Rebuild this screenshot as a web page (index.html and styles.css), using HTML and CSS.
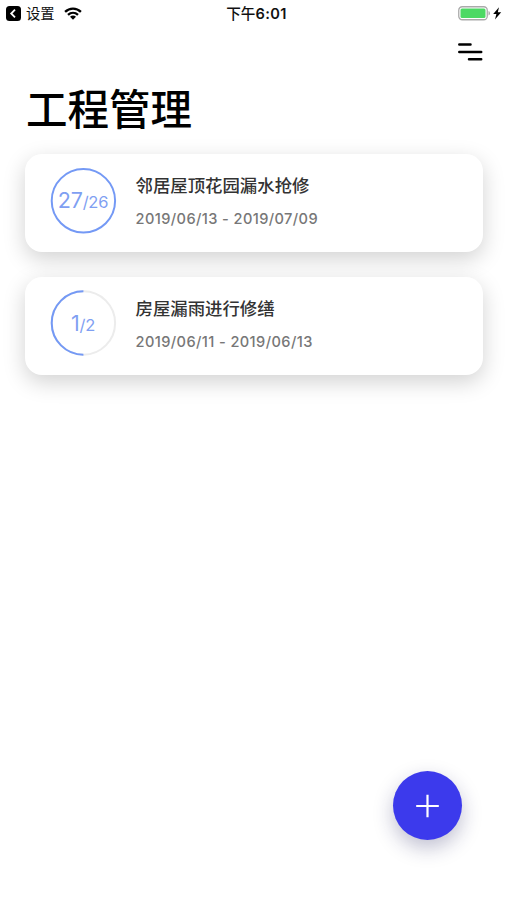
FILE: index.html
```html
<!DOCTYPE html>
<html lang="zh-CN">
<head>
  <meta charset="UTF-8" />
  <meta name="viewport" content="width=device-width, initial-scale=1.0" />
  <title>工程管理</title>
  <link rel="stylesheet" href="styles.css">
</head>
<body>
  <!-- status bar -->
  <div class="status">
    <div class="status-left">
      <svg class="back" width="15" height="15" viewBox="0 0 15 15"><rect width="15" height="15" rx="3.5"/><path d="M9 3.7 L5.2 7.5 L9 11.3"/></svg>
      <span class="back-text">设置</span>
      <svg class="wifi" width="18" height="13" viewBox="0 0 18 13">
        <path d="M1.1 4.9 C5.6 .5 12.4 .5 16.9 4.9 M4 7.8 C6.9 5.1 11.1 5.1 14 7.8"/>
        <path class="dot" d="M6 9.8 C7.8 8.2 10.2 8.2 12 9.8 L9 12.8 Z"/>
      </svg>
    </div>
    <div class="time">下午<span>6:01</span></div>
    <div class="status-right">
      <svg width="44" height="15" viewBox="0 0 44 15">
        <rect class="shell" x=".75" y=".75" width="28.5" height="13" rx="3.5"/>
        <rect class="level" x="2.5" y="2.5" width="25" height="9.5" rx="1.5"/>
        <path class="cap" d="M30.5 5 Q32 5.5 32 7.2 Q32 9 30.5 9.5 Z"/>
        <path d="M41 1.2 L35.2 8 H38.4 L37 13.6 L43.2 6.2 H39.8 Z"/>
      </svg>
    </div>
  </div>

  <div class="toolbar">
    <svg class="menu" width="26" height="20" viewBox="0 0 26 20"><path d="M2.3 2.5 H13.5 M2.3 9.9 H24.2 M12 17.2 H24.2"/></svg>
  </div>

  <h1>工程管理</h1>

  <div class="list">
    <div class="card">
      <div class="ring">
        <svg width="66" height="66" viewBox="0 0 66 66">
          <circle class="bar" cx="32.4" cy="32.8" r="31.7"/>
        </svg>
        <div class="count"><b>27</b>/26</div>
      </div>
      <div class="info">
        <div class="name">邻居屋顶花园漏水抢修</div>
        <div class="date">2019/06/13 - 2019/07/09</div>
      </div>
    </div>

    <div class="card">
      <div class="ring">
        <svg width="66" height="66" viewBox="0 0 66 66">
          <circle class="track" cx="32.4" cy="32" r="31.7"/>
          <path class="bar" d="M32.4 63.7 A31.7 31.7 0 0 1 32.4 .3"/>
        </svg>
        <div class="count"><b>1</b>/2</div>
      </div>
      <div class="info">
        <div class="name">房屋漏雨进行修缮</div>
        <div class="date">2019/06/11 - 2019/06/13</div>
      </div>
    </div>
  </div>

  <button class="add">
    <svg width="24" height="24" viewBox="0 0 24 24"><path d="M11.5 .7 V23.3 M.2 12 H22.8"/></svg>
  </button>
</body>
</html>
```
FILE: styles.css
```css
* { box-sizing: border-box; }
body {
  margin: 0;
  height: 900px;
  background: #fff;
  color: #111;
  font-family: Inter, "Noto Sans CJK SC", sans-serif;
  overflow: hidden;
}
svg {
  display: block;
  overflow: visible;
}
.status {
  display: grid;
  grid-template-columns: 1fr auto 1fr;
  align-items: center;
  height: 27px;
  padding: 0 5px 0 6px;
  font-size: 14px;
}
.status-left {
  display: flex;
  align-items: center;
}
.back path {
  fill: none;
  stroke: #fff;
  stroke-width: 1.8;
}
.back-text {
  margin: 0 9px 0 5px;
  font-size: 14.3px;
  line-height: 20px;
}
.wifi path {
  fill: none;
  stroke: #000;
  stroke-width: 2.3;
}
.wifi .dot {
  fill: #000;
  stroke: none;
}
.time {
  padding: 0 0 2px 5px;
  font-weight: 500;
  font-size: 14.6px;
}
.time span {
  font-weight: 600;
  letter-spacing: 0.4px;
}
.status-right {
  display: flex;
  justify-content: flex-end;
}
.shell {
  fill: #fff;
  stroke: #aaa;
  stroke-width: 1.3;
}
.level { fill: #4cd964; }
.cap { fill: #aaa; }
.toolbar {
  display: flex;
  justify-content: flex-end;
  padding: 15px 24px 0 0;
}
.menu path {
  stroke: #000;
  stroke-width: 2.5;
  stroke-linecap: round;
}
h1 {
  margin: 18px 0 0 26px;
  height: 60px;
  line-height: 60px;
  font-size: 41.5px;
  font-weight: 500;
  color: #000;
}
.list {
  display: flex;
  flex-direction: column;
  gap: 25px;
  padding: 14px 24px 0 25px;
}
.card {
  display: flex;
  align-items: flex-start;
  height: 98px;
  padding: 14px 26px 0;
  border-radius: 17px;
  background: #fff;
  box-shadow: 0 7px 22px rgba(0, 0, 0, 0.18);
}
.ring {
  display: grid;
  width: 66px;
  height: 66px;
}
.ring svg, .count { grid-area: 1 / 1; }
.ring circle, .ring path {
  fill: none;
  stroke-width: 2;
}
.ring .track { stroke: #ececec; }
.ring .bar { stroke: #7499f5; }
.count {
  align-self: center;
  padding: 0 2px 2px 0;
  text-align: center;
  font-size: 16.5px;
  letter-spacing: -0.2px;
  color: #7f9ff2;
}
.count b {
  font-size: 21.5px;
  font-weight: 400;
}
.info { margin-left: 18.5px; }
.name {
  margin-top: 4px;
  line-height: 28px;
  font-size: 17.4px;
  font-weight: 500;
  color: #333;
}
.date {
  margin-top: 9px;
  line-height: 20px;
  font-size: 14.6px;
  font-weight: 500;
  letter-spacing: 0.4px;
  color: #777;
}
.add {
  position: absolute;
  left: 393px;
  top: 771px;
  display: flex;
  align-items: center;
  justify-content: center;
  width: 69px;
  height: 69px;
  padding: 0;
  border: none;
  border-radius: 50%;
  background: #3c3aec;
  box-shadow: 0 8px 20px rgba(30, 30, 90, 0.28);
}
.add path {
  stroke: #fff;
  stroke-width: 2.2;
}
```
